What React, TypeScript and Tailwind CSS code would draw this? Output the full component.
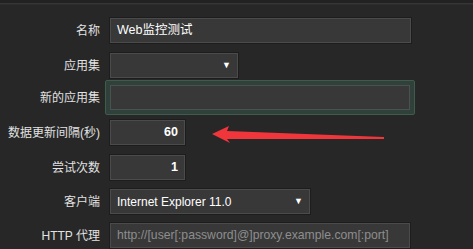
const font = { fontFamily: '"Liberation Sans", "Noto Sans CJK SC", sans-serif' };

type RowProps = {
  label: string;
  className?: string;
  children: React.ReactNode;
};

function Row({ label, className, children }: RowProps) {
  return (
    <div className={`flex items-center ${className ?? ''}`}>
      <div className="w-[100px] shrink-0 text-right text-[12px] text-[#e2e2e2]">{label}</div>
      <div className="ml-[10px] flex">{children}</div>
    </div>
  );
}

const boxCls =
  'flex h-[25px] items-center border border-[#4b4b4b] bg-[#383838] px-[6px] shadow-[0_0_0_1px_#1d1d1d]';

function SelectArrow() {
  return <span className="ml-auto text-[9px] leading-none text-white">▼</span>;
}

export default function App() {
  return (
    <div style={font} className="relative h-[249px] w-[473px] overflow-hidden bg-[#272727]">
      {/* top strip */}
      <div className="h-[3px] bg-[#222]" />
      <div className="h-[1px] bg-[#363636]" />
      <div className="h-[1px] bg-[#2d2d2d]" />

      <div className="flex flex-col pt-[13px]">
        <Row label="名称">
          <div className={`${boxCls} w-[301px] text-[12.5px] text-white`}>Web监控测试</div>
        </Row>

        <Row label="应用集" className="mt-[10px]">
          <div className={`${boxCls} w-[128px]`}>
            <SelectArrow />
          </div>
        </Row>

        <Row label="新的应用集" className="mt-[2px]">
          <div className="-ml-[5px] rounded-[2px] border border-[#3e5b4b] bg-[#30403a] p-[4px]">
            <div className="h-[25px] w-[300px] border border-[#4a5250] bg-[#383838]" />
          </div>
        </Row>

        <Row label="数据更新间隔(秒)" className="mt-[5px]">
          <div className={`${boxCls} w-[75px] justify-end text-[12.5px] font-semibold text-white`}>60</div>
        </Row>

        <Row label="尝试次数" className="mt-[10px]">
          <div className={`${boxCls} w-[75px] justify-end text-[12.5px] font-semibold text-white`}>1</div>
        </Row>

        <Row label="客户端" className="mt-[9px]">
          <div className={`${boxCls} w-[200px] text-[12px] text-white`}>
            <span>Internet Explorer 11.0</span>
            <SelectArrow />
          </div>
        </Row>

        <Row label="HTTP 代理" className="mt-[9px]">
          <div className={`${boxCls} w-[300px] text-[12.2px] text-[#8e8e8e]`}>
            http://[user[:password]@]proxy.example.com[:port]
          </div>
        </Row>
      </div>

      {/* red annotation arrow */}
      <svg
        className="pointer-events-none absolute left-0 top-0"
        width="473"
        height="249"
        viewBox="0 0 473 249"
      >
        <polygon
          points="212,134 229,126 227,131 384,137 384,139 227,139 230,143"
          fill="#f0363a"
        />
      </svg>
    </div>
  );
}
